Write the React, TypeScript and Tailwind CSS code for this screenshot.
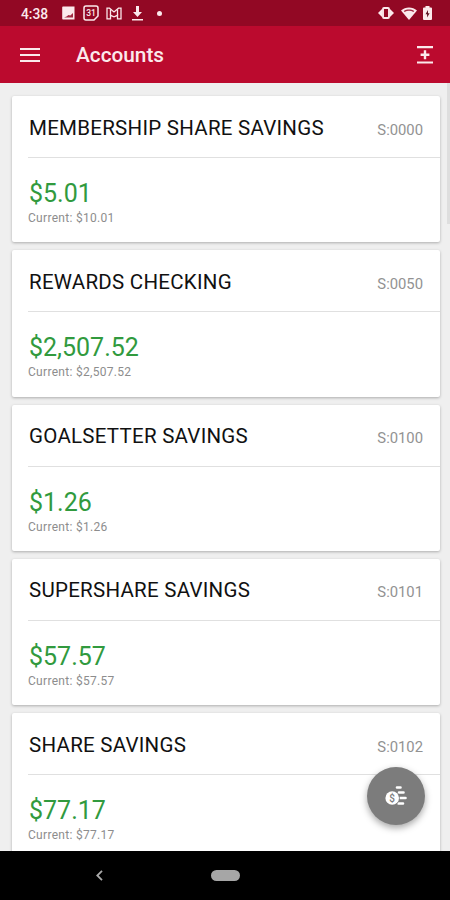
import React from "react";

type Account = { name: string; code: string; available: string; current: string };

const accounts: Account[] = [
  { name: "MEMBERSHIP SHARE SAVINGS", code: "S:0000", available: "$5.01", current: "$10.01" },
  { name: "REWARDS CHECKING", code: "S:0050", available: "$2,507.52", current: "$2,507.52" },
  { name: "GOALSETTER SAVINGS", code: "S:0100", available: "$1.26", current: "$1.26" },
  { name: "SUPERSHARE SAVINGS", code: "S:0101", available: "$57.57", current: "$57.57" },
  { name: "SHARE SAVINGS", code: "S:0102", available: "$77.17", current: "$77.17" },
];

function StatusBar() {
  return (
    <div className="flex h-[26px] shrink-0 items-center bg-[#920824] pl-[21px] pr-[18px] text-[#fbe9ec]">
      <span className="w-[41px] pt-px text-[13.800px] font-medium leading-[26px]">4:38</span>
      <svg className="mr-[8px]" width="13" height="14" viewBox="0 0 13 14">
        <path d="M1 .5h11.500v13H1a.8.8 0 0 1-.8-.8V1.300A.8.8 0 0 1 1 .5z" fill="currentColor" />
        <path d="M2 11.500h9V7L8.300 9.500 6.500 9 4.500 10.500z" fill="#920824" opacity=".85" />
      </svg>
      <svg className="mr-[7px]" width="16" height="16" viewBox="0 0 16 16" fill="none" stroke="currentColor">
        <path d="M3 1h10a2 2 0 0 1 2 2v8l-4 4H3a2 2 0 0 1-2-2V3a2 2 0 0 1 2-2z" strokeWidth="1.500" />
        <text x="8" y="11" textAnchor="middle" fontSize="8.500" fontWeight="500" fill="currentColor" stroke="none">31</text>
      </svg>
      <svg className="mr-[10px]" width="16" height="13" viewBox="0 0 16 13" fill="none" stroke="currentColor" strokeWidth="1.300">
        <path d="M1 1.200h2.500L8 5l4.500-3.800H15v10.600h-3.500V8.300L8 9.800 4.500 8.300v3.500H1z" />
        <path d="M4.500 2.500v6M11.500 2.500v6" />
      </svg>
      <svg className="mr-[14px]" width="11" height="15" viewBox="0 0 11 15" fill="currentColor">
        <path d="M4 0h3v6h3L5.500 11 1 6h3zM0 13h11v1.600H0z" />
      </svg>
      <span className="size-[5px] rounded-full bg-[#fbe9ec]" />
      <div className="ml-auto flex items-center">
        <svg className="mr-[7px]" width="16" height="12" viewBox="0 0 16 12">
          <rect x="5" y="1" width="6" height="10" rx="1" fill="none" stroke="currentColor" strokeWidth="1.900" />
          <path d="M4 2v8L0 6zM12 2v8L16 6z" fill="currentColor" />
        </svg>
        <svg className="mr-[6px]" width="16" height="13" viewBox="0 0 16 13">
          <path d="M0 3.500C4.500-.6 11.500-.6 16 3.500L8 13z" fill="currentColor" />
          <path d="M2.800 3.900C5.800 2.100 10.200 2.100 13.200 3.900L12.400 4.900C9.700 3.500 6.300 3.500 3.600 4.900z" fill="#920824" opacity=".85" />
        </svg>
        <svg width="9" height="14" viewBox="0 0 9 14">
          <path d="M2.500 0h4v1.500h1.500a1 1 0 0 1 1 1V13a1 1 0 0 1-1 1H1a1 1 0 0 1-1-1V2.500a1 1 0 0 1 1-1h1.500z" fill="currentColor" />
          <path d="M5 4L2.500 8.300h1.600V11.500L6.600 7.200H5z" fill="#5b1020" />
        </svg>
      </div>
    </div>
  );
}

function AppBar() {
  return (
    <header className="flex h-[57px] shrink-0 items-center bg-[#bb0a2e] pl-5 pr-[17px] text-[#fbe9ec]">
      <svg width="20" height="14" viewBox="0 0 20 14" fill="currentColor">
        <path d="M0 0h20v2H0zM0 6h20v2H0zM0 12h20v2H0z" />
      </svg>
      <h1 className="ml-9 pt-px text-[20.800px] font-medium leading-6">Accounts</h1>
      <svg className="ml-auto" width="16" height="18" viewBox="0 0 16 18" fill="currentColor">
        <path d="M0 0h16v2.200H0zM0 15.400h16v2.200H0zM6.800 4.300h2.400v3.300h3.200v2.400H9.200v3.300H6.800V10H3.600V7.600h3.200z" />
      </svg>
    </header>
  );
}

function AccountCard({ name, code, available, current }: Account) {
  return (
    <article className="h-[146.200px] shrink-0 rounded-[2px] bg-white pl-4 shadow-[0_1px_3px_rgba(0,0,0,0.28)]">
      <div className="flex h-[62px] items-center justify-between border-b border-[#e0e0e0] pr-[17px]">
        <h2 className="pt-[2px] pl-px text-[20.500px] leading-6 tracking-[0.26px] text-[#111]">{name}</h2>
        <span className="pt-[6px] text-[14.800px] leading-5 text-[#929292]">{code}</span>
      </div>
      <p className="pt-[21px] pl-px text-[25px] leading-[30px] text-[#319a3e]">{available}</p>
      <p className="text-[12px] leading-[18px] tracking-[0.3px] text-[#8d8d8d]">
        Current: {current}
      </p>
    </article>
  );
}

function CoinsButton() {
  return (
    <button className="absolute right-[25px] bottom-[26px] flex size-[58px] items-center justify-center rounded-full bg-[#7c7c7c] shadow-[0_3px_7px_rgba(0,0,0,0.35)]">
      <svg width="22" height="20" viewBox="0 0 22 20">
        <path d="M12 1.500h3.500M14 6.500h4.500M15 12h5.500M13.500 17.500h4.500" fill="none" stroke="white" strokeWidth="2.600" strokeLinecap="round" />
        <circle cx="7.200" cy="12" r="7.600" fill="#7c7c7c" />
        <circle cx="7.200" cy="12" r="6.800" fill="white" />
        <text x="7.200" y="15.500" textAnchor="middle" fontSize="10" fontWeight="500" fill="#7c7c7c">$</text>
      </svg>
    </button>
  );
}

export default function App() {
  return (
    <div className="flex h-[900px] w-[450px] flex-col overflow-hidden bg-[#efefef] font-['Roboto',sans-serif]">
      <StatusBar />
      <AppBar />
      <main className="relative flex min-h-0 flex-1 overflow-hidden">
        <div className="flex w-[440px] shrink-0 flex-col gap-2 pt-[13.300px] pl-3">
          {accounts.map((a) => (
            <AccountCard key={a.code} {...a} />
          ))}
        </div>
        <div className="ml-[7px] h-[141px] w-[3px] bg-[#dedede]" />
        <CoinsButton />
      </main>
      <nav className="flex h-[49px] shrink-0 items-center bg-black pl-[96px]">
        <svg width="7" height="11" viewBox="0 0 7 11" fill="none" stroke="#aaa" strokeWidth="1.800">
          <path d="M6 .8L1.300 5.500 6 10.200" />
        </svg>
        <span className="ml-[108px] h-[11px] w-[29px] rounded-full bg-[#a6a6a6]" />
      </nav>
    </div>
  );
}
